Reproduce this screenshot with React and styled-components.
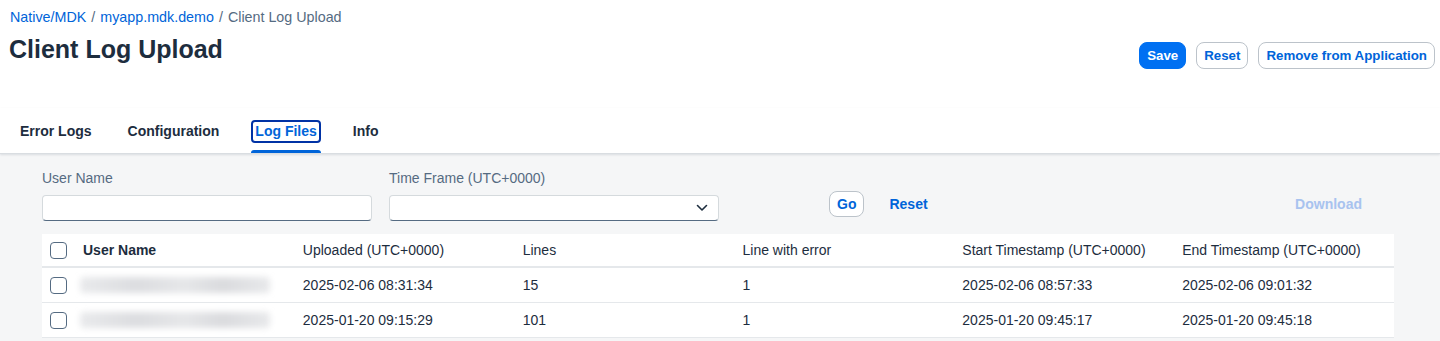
import React from 'react'
import styled, { createGlobalStyle } from 'styled-components'

const rows = [
  { uploaded: '2025-02-06 08:31:34', lines: '15', errorLine: '1', start: '2025-02-06 08:57:33', end: '2025-02-06 09:01:32' },
  { uploaded: '2025-01-20 09:15:29', lines: '101', errorLine: '1', start: '2025-01-20 09:45:17', end: '2025-01-20 09:45:18' },
]

const tabs = ['Error Logs', 'Configuration', 'Log Files', 'Info']

function App() {
  return (
    <Page>
      <GlobalStyle />
      <Header>
        <TitleBlock>
          <Breadcrumbs>
            <a>Native/MDK</a>
            <Sep>/</Sep>
            <a>myapp.mdk.demo</a>
            <Sep>/</Sep>
            <span>Client Log Upload</span>
          </Breadcrumbs>
          <Title>Client Log Upload</Title>
        </TitleBlock>
        <Actions>
          <Button primary>Save</Button>
          <Button>Reset</Button>
          <Button>Remove from Application</Button>
        </Actions>
      </Header>

      <TabBar>
        {tabs.map(t => (
          <Tab key={t} active={t === 'Log Files'}>{t}</Tab>
        ))}
      </TabBar>

      <Content>
        <FilterBar>
          <Field>
            <Label>User Name</Label>
            <Input />
          </Field>
          <Field>
            <Label>Time Frame (UTC+0000)</Label>
            <Select>
              <svg width="12" height="8" viewBox="0 0 12 8">
                <path d="M1.5 1.5 L6 6 L10.5 1.5" fill="none" stroke="#1d2d3e" strokeWidth="1.6" strokeLinecap="round" strokeLinejoin="round" />
              </svg>
            </Select>
          </Field>
          <FilterButtons>
            <Button small>Go</Button>
            <LinkButton>Reset</LinkButton>
          </FilterButtons>
          <LinkButton disabled>Download</LinkButton>
        </FilterBar>

        <Table>
          <HeadRow>
            <Cell><Checkbox /></Cell>
            <Cell bold>User Name</Cell>
            <Cell>Uploaded (UTC+0000)</Cell>
            <Cell>Lines</Cell>
            <Cell>Line with error</Cell>
            <Cell>Start Timestamp (UTC+0000)</Cell>
            <Cell>End Timestamp (UTC+0000)</Cell>
          </HeadRow>
          {rows.map((r, i) => (
            <Row key={i}>
              <Cell><Checkbox /></Cell>
              <Cell><Blurred /></Cell>
              <Cell>{r.uploaded}</Cell>
              <Cell>{r.lines}</Cell>
              <Cell>{r.errorLine}</Cell>
              <Cell>{r.start}</Cell>
              <Cell>{r.end}</Cell>
            </Row>
          ))}
        </Table>
      </Content>
    </Page>
  )
}

export default App

const GlobalStyle = createGlobalStyle`
  body {
    margin: 0;
    font-family: "Liberation Sans", Arial, sans-serif;
    color: #1d2d3e;
    background: #f5f6f7;
  }
`
const Page = styled.div`
  min-height: 341px;
  display: flex;
  flex-direction: column;
`
const Header = styled.div`
  background: #fff;
  display: flex;
  justify-content: space-between;
  padding: 0 5px 0 9px;
  height: 108px;
`
const TitleBlock = styled.div`
  display: flex;
  flex-direction: column;
`
const Breadcrumbs = styled.div`
  margin-top: 9px;
  padding-left: 1px;
  font-size: 14.3px;
  line-height: 16px;
  color: #556b82;
  a{
    color: #0064d9;
    cursor: pointer;
  }
`
const Sep = styled.span`
  margin: 0 5px;
  color: #556b82;
`
const Title = styled.h1`
  margin: 9px 0 0;
  font-size: 25px;
  line-height: 30px;
  font-weight: 700;
  color: #1d2d3e;
`
const Actions = styled.div`
  display: flex;
  gap: 10px;
  padding-top: 42px;
  align-items: flex-start;
`
const Button = styled.button`
  font-family: inherit;
  font-size: ${p => p.small ? '14px' : '13.3px'};
  font-weight: 700;
  height: ${p => p.small ? '26px' : '27px'};
  padding: 0 7px;
  border-radius: 8px;
  border: 1px solid ${p => p.primary ? '#0070f2' : '#bcc3ca'};
  background: ${p => p.primary ? '#0070f2' : '#fff'};
  color: ${p => p.primary ? '#fff' : '#0064d9'};
  cursor: pointer;
`
const TabBar = styled.div`
  background: #fff;
  height: 45px;
  display: flex;
  align-items: flex-end;
  gap: 28px;
  padding-left: 16px;
  border-bottom: 1px solid #d9dde1;
  box-shadow: 0 1px 2px rgba(34, 53, 72, 0.12);
  position: relative;
  z-index: 1;
`
const Tab = styled.div`
  position: relative;
  height: 33px;
  box-sizing: border-box;
  padding: 0 4px;
  font-size: 14px;
  font-weight: 700;
  line-height: 23px;
  color: ${p => p.active ? '#0064d9' : '#1d2d3e'};
  &::before{
    content: '';
    display: ${p => p.active ? 'block' : 'none'};
    position: absolute;
    left: 0;
    right: 0;
    top: 0;
    height: 23px;
    box-sizing: border-box;
    border: 2px solid #0032a5;
    border-radius: 4px;
  }
  &::after{
    content: '';
    display: ${p => p.active ? 'block' : 'none'};
    position: absolute;
    left: 0;
    right: 0;
    bottom: 0;
    height: 3px;
    background: #0064d9;
    border-radius: 3px 3px 0 0;
  }
`
const Content = styled.div`
  padding: 0 46px 0 42px;
`
const FilterBar = styled.div`
  display: flex;
  align-items: flex-end;
  gap: 17px;
  padding: 16px 0 13px;
`
const Field = styled.div`
  display: flex;
  flex-direction: column;
  gap: 8px;
  width: 330px;
`
const Label = styled.label`
  font-size: 14px;
  line-height: 17px;
  color: #556b82;
`
const Input = styled.input`
  box-sizing: border-box;
  height: 26px;
  width: 100%;
  border: 1px solid #d5dadd;
  border-bottom: 1px solid #556b82;
  border-radius: 4px;
  background: #fff;
  font-family: inherit;
`
const Select = styled.div`
  box-sizing: border-box;
  height: 26px;
  border: 1px solid #d5dadd;
  border-bottom: 1px solid #556b82;
  border-radius: 4px;
  background: #fff;
  display: flex;
  align-items: center;
  justify-content: flex-end;
  padding-right: 10px;
`
const FilterButtons = styled.div`
  display: flex;
  align-items: center;
  gap: 25px;
  margin-left: 93px;
  padding-bottom: 4px;
`
const LinkButton = styled.span`
  font-size: 14px;
  font-weight: 700;
  line-height: 26px;
  color: ${p => p.disabled ? '#a8c3ef' : '#0064d9'};
  cursor: pointer;
  margin-left: ${p => p.disabled ? 'auto' : '0'};
  margin-right: ${p => p.disabled ? '32px' : '0'};
  padding-bottom: ${p => p.disabled ? '4px' : '0'};
`
const Table = styled.div`
  background: #fff;
  font-size: 14px;
`
const HeadRow = styled.div`
  display: grid;
  grid-template-columns: 33px repeat(6, 1fr);
  height: 32px;
  align-items: center;
  border-bottom: 2px solid #e5e8eb;
`
const Row = styled(HeadRow)`
  height: 34px;
  border-bottom: 1px solid #e5e8eb;
`
const Cell = styled.div`
  padding-left: 8px;
  font-weight: ${p => p.bold ? 700 : 400};
  color: #1d2d3e;
  white-space: nowrap;
`
const Checkbox = styled.div`
  width: 17px;
  height: 17px;
  box-sizing: border-box;
  border: 1px solid #556b82;
  border-radius: 4px;
  background: #fff;
`
const Blurred = styled.div`
  margin-left: -3px;
  width: 190px;
  height: 16px;
  border-radius: 4px;
  background: linear-gradient(90deg, #e9eaec 0%, #dcdde0 30%, #e6e7e9 55%, #dadbde 75%, #e8e9eb 100%);
  filter: blur(3px);
`
